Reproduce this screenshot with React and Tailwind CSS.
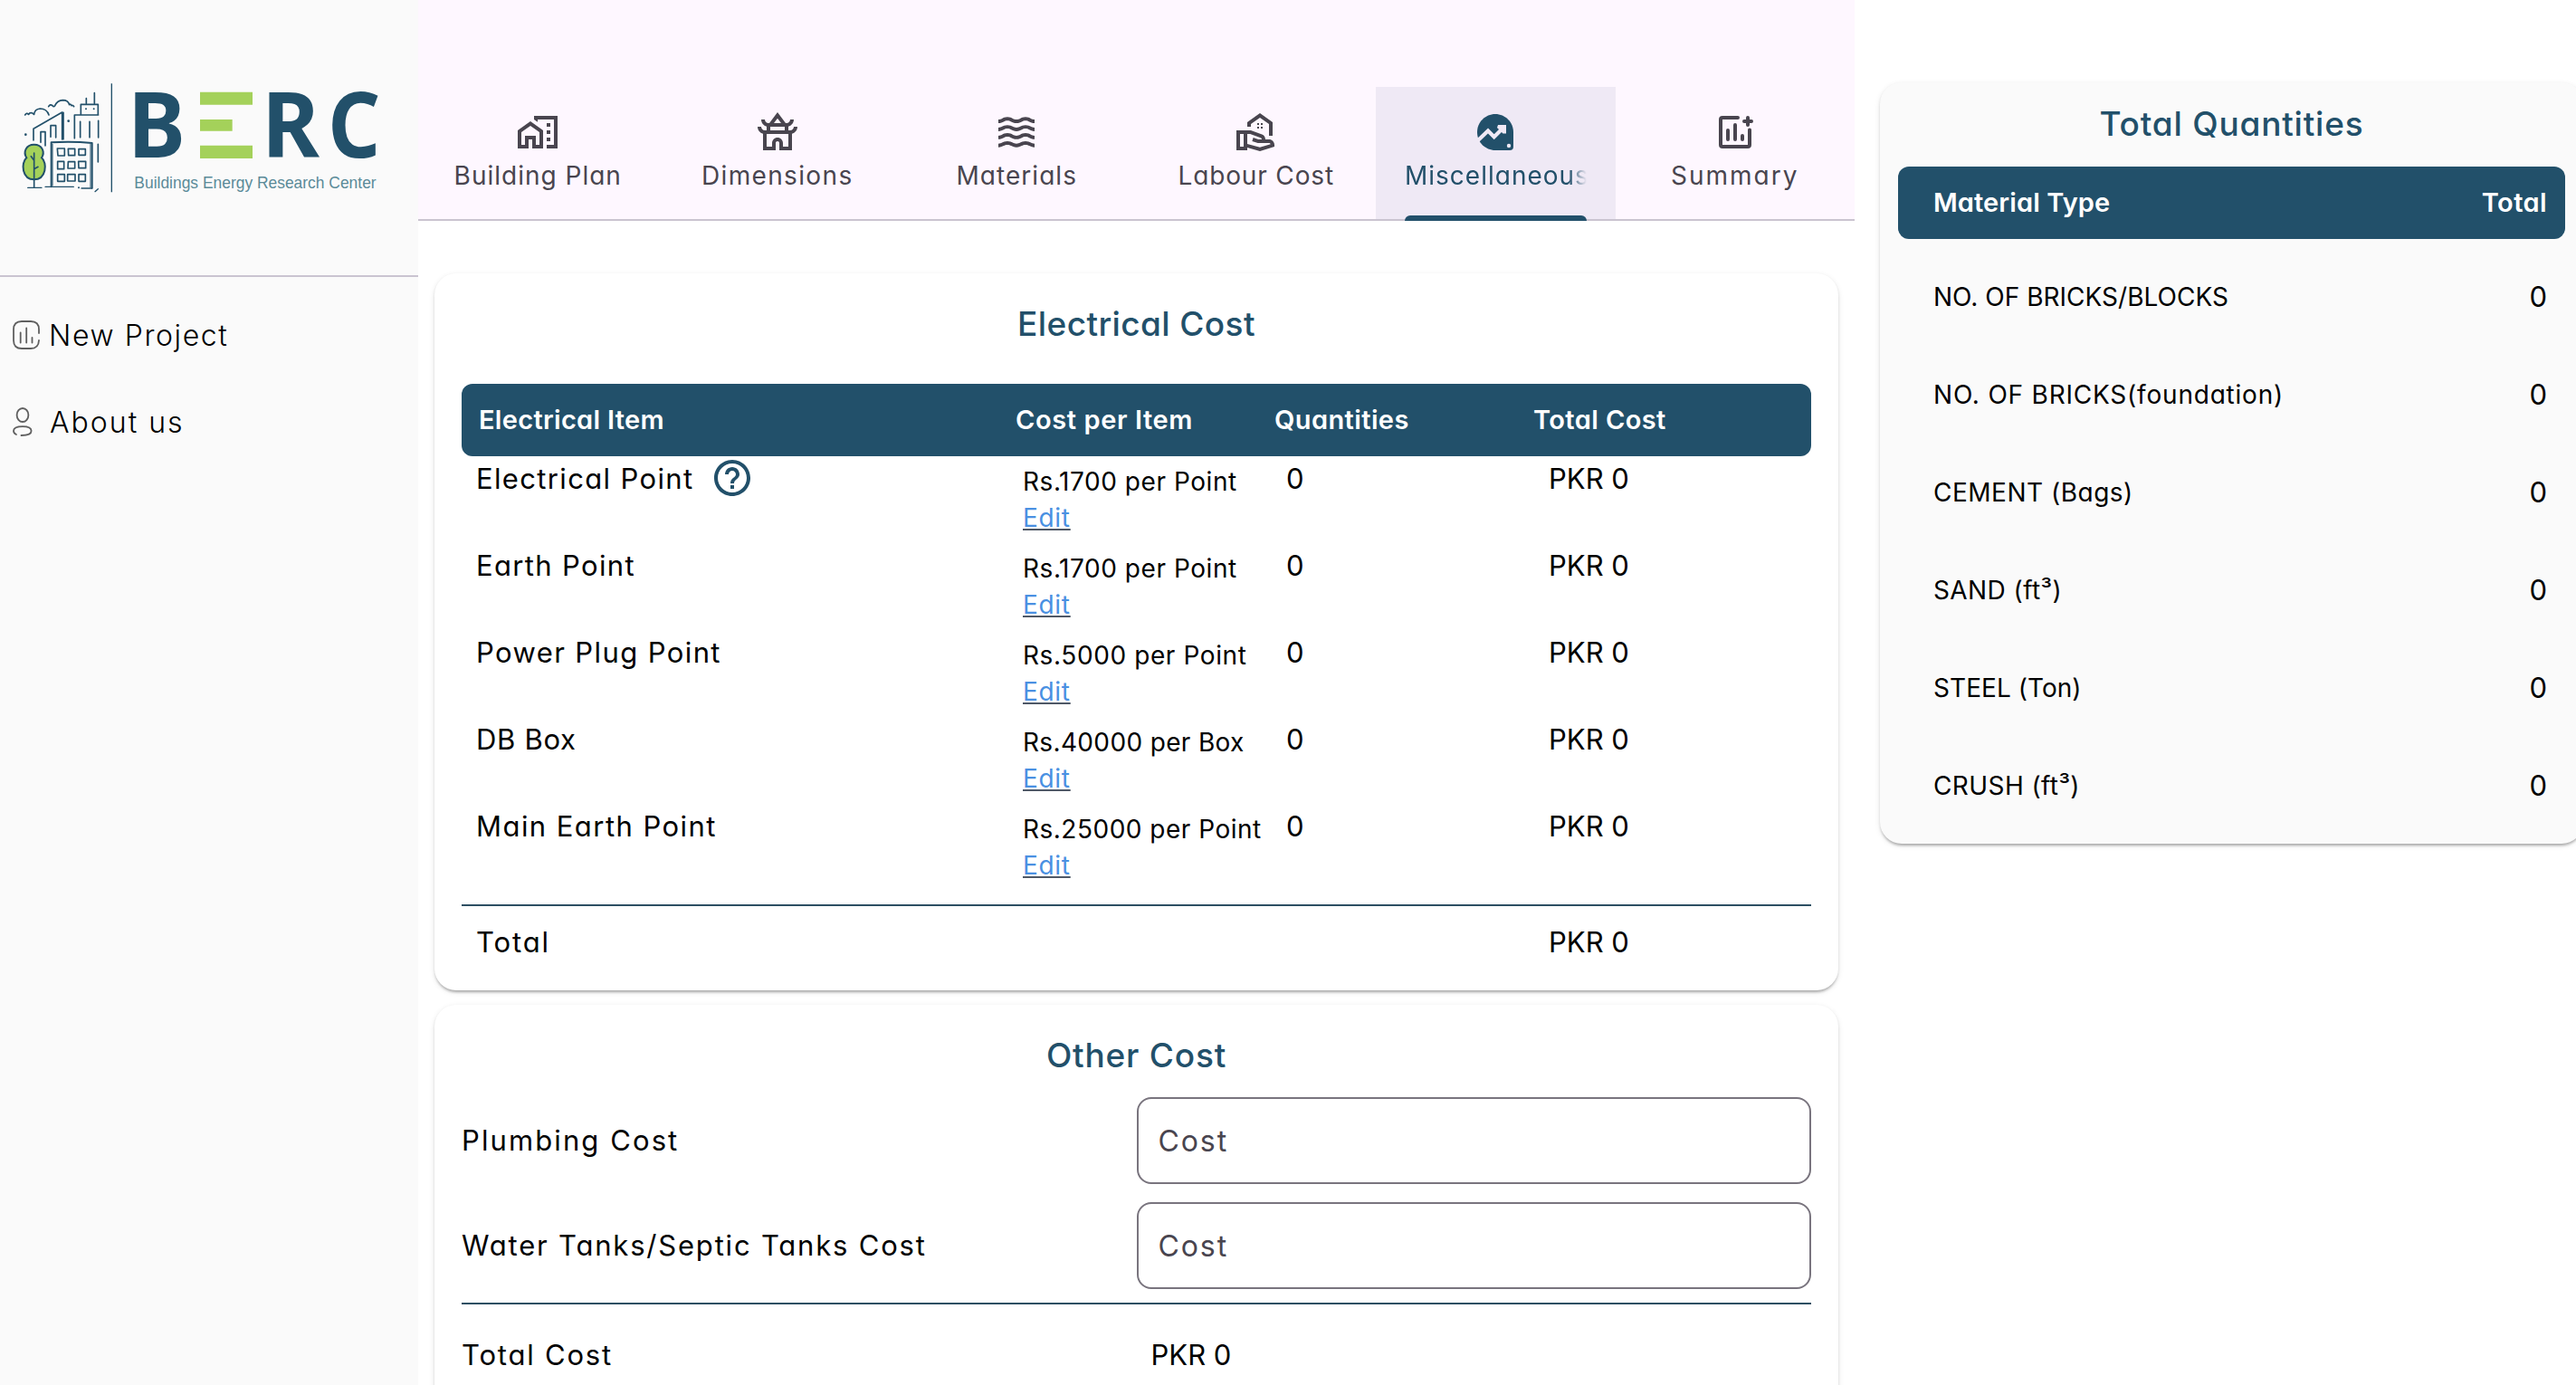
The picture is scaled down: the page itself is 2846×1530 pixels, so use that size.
import {
  MdOutlineMapsHomeWork,
  MdOutlineTempleBuddhist,
  MdWaves,
  MdOutlineRealEstateAgent,
  MdHelpOutline,
} from "react-icons/md";

function TrendIcon({ className }) {
  return (
    <svg viewBox="0 0 48 48" className={className}>
      <path d="M24 4C13 4 4 13 4 24s9 20 20 20h16a4 4 0 0 0 4-4V24C44 13 35 4 24 4z" fill="currentColor" />
      <path d="M4.500 33.500 16 22.500 22.700 29.200 33 19" fill="none" className="stroke-[#efe9f5]" strokeWidth="4.200" />
      <path d="M27 16h9v9.500h-3.500L26 19z" className="fill-[#efe9f5]" />
      <circle cx="39" cy="39" r="2.200" className="fill-[#efe9f5]" />
    </svg>
  );
}

function AddChartIcon({ className }) {
  return (
    <svg viewBox="0 0 24 24" className={className} fill="none" stroke="currentColor" strokeWidth="2" strokeLinecap="round" strokeLinejoin="round">
      <path d="M13.5 4H5a1 1 0 0 0-1 1v14a1 1 0 0 0 1 1h14a1 1 0 0 0 1-1v-8.2" />
      <path d="M8 11v5M12 8v8M16 14v2M19 4v4M17 6h4" />
    </svg>
  );
}

function ProjectIcon() {
  return (
    <svg viewBox="0 0 30 32" className="h-8 w-[30px] text-[#5f5f5f]" fill="none" stroke="currentColor" strokeWidth="1.8" strokeLinecap="round">
      <path d="M29 14V10Q29 1 20 1H10Q1 1 1 10V22Q1 31 10 31H20Q28.6 31 29 22" />
      <path d="M8.7 13.5V24.5M15.2 8.5V24.5M21.5 19V24.5" />
    </svg>
  );
}

function PersonIcon() {
  return (
    <svg viewBox="0 0 22 32" className="h-8 w-[22px] text-[#5f5f5f]" fill="none" stroke="currentColor" strokeWidth="1.8" strokeLinecap="round">
      <ellipse cx="11" cy="8.5" rx="6.4" ry="7.5" />
      <path d="M4 30C2.2 29.2 1 28 1 26C1 22.6 5.5 21.2 11 21.2S20.6 22.600 20.600 26S16 31 9.500 31" />
    </svg>
  );
}

function Logo() {
  return (
    <svg viewBox="0 -60 1410 570" className="mt-[50px] block h-[190px] w-[470px] shrink-0">
      <g fill="none" stroke="#22506a" strokeWidth="5" strokeLinecap="round" strokeLinejoin="round">
        <path d="M83 171q5-9 12-2 4-8 13-4 6 6 5 3 2-16 20-18 22 0 29 21" />
        <path d="M161 143q5-9 13-3 4 6 8 0 8-17 26-18 18 0 22 15 4-4 7 3 4-3 8 3" />
        <path d="M111 255V217L206 162V252M204 165l6-2v88" />
        <path d="M135 262v-35h15v46M168 244v-38h17v40" />
        <path d="M247 248V171H326M268 169V136H325V169M286 132V116M313 132V98" />
        <path d="M266 193v52M297 193v52M326 190v56M325 268v59" />
        <path d="M170 409V262Q240 258 305 264V413" strokeWidth="6" />
        <path d="M174 268V405M300 268V411" strokeWidth="3" />
        <path d="M92 412H138M150 409H244M270 414H305M315 425l10-9" strokeWidth="4" />
      </g>
      <path
        d="M113 269C86 269 76 294 88 313C68 330 73 385 113 385S158 330 138 313C150 294 140 269 113 269Z"
        fill="#a4d15a"
        stroke="#22506a"
        strokeWidth="6"
      />
      <path d="M113 410V297M113 322l-10-14M113 350l13-7" stroke="#22506a" strokeWidth="5" fill="none" strokeLinecap="round" />
      <g fill="none" stroke="#22506a" strokeWidth="5" strokeLinejoin="round">
        <path d="M190 282h24v24h-22zM226 283h22v22h-21zM261 284h22v20h-22z" />
        <path d="M191 325h21v25h-21zM226 326h22v22h-23zM260 325h24v22h-23z" />
        <path d="M191 368h23v23h-23zM224 368h25v22h-25zM261 368h22v23h-22z" />
      </g>
      <g fill="#22506a">
        <circle cx="85" cy="236" r="4" />
        <circle cx="227" cy="191" r="4" />
        <circle cx="285" cy="151" r="3" />
        <circle cx="311" cy="151" r="3" />
        <circle cx="261" cy="412" r="3" />
      </g>
      <path d="M370 67V427" stroke="#22506a" strokeWidth="4" />
      <g className="font-['Noto_Sans',sans-serif] font-bold" fontSize="304" fill="#22506a">
        <text x="424" y="311" textLength="191" lengthAdjust="spacingAndGlyphs">B</text>
        <text x="868" y="311" textLength="191" lengthAdjust="spacingAndGlyphs">R</text>
        <text x="1087" y="311" textLength="174" lengthAdjust="spacingAndGlyphs">C</text>
      </g>
      <path d="M663 95h174v42H663zM663 186h107v38H663zM663 272h174v43H663z" fill="#a4d15a" />
      <text x="445" y="415" fontSize="57" textLength="802" lengthAdjust="spacingAndGlyphs" fill="#5b8b99" className="font-['Liberation_Sans',sans-serif]">
        Buildings Energy Research Center
      </text>
    </svg>
  );
}

const tabs = [
  { label: "Building Plan", Icon: MdOutlineMapsHomeWork, tracking: "tracking-[1px]" },
  { label: "Dimensions", Icon: MdOutlineTempleBuddhist, tracking: "tracking-[1.35px]" },
  { label: "Materials", Icon: MdWaves, tracking: "tracking-[1.05px]" },
  { label: "Labour Cost", Icon: MdOutlineRealEstateAgent, tracking: "tracking-[0.85px]" },
  { label: "Miscellaneous", Icon: TrendIcon, tracking: "tracking-[1px]", active: true },
  { label: "Summary", Icon: AddChartIcon, tracking: "tracking-[2px]" },
];

const electrical = [
  { item: "Electrical Point", cost: "Rs.1700 per Point", help: true, it: "tracking-[1.35px]", ct: "tracking-[0.55px]" },
  { item: "Earth Point", cost: "Rs.1700 per Point", it: "tracking-[1.35px]", ct: "tracking-[0.55px]" },
  { item: "Power Plug Point", cost: "Rs.5000 per Point", it: "tracking-[1.4px]", ct: "tracking-[0.6px]" },
  { item: "DB Box", cost: "Rs.40000 per Box", it: "tracking-[0.7px]", ct: "tracking-[0.35px]" },
  { item: "Main Earth Point", cost: "Rs.25000 per Point", it: "tracking-[1.45px]", ct: "tracking-[0.5px]" },
];

const quantities = [
  { name: "NO. OF BRICKS/BLOCKS", tracking: "tracking-[0.02px]" },
  { name: "NO. OF BRICKS(foundation)", tracking: "tracking-[0.79px]" },
  { name: "CEMENT (Bags)", tracking: "tracking-[0.5px]" },
  { name: "SAND (ft³)", tracking: "tracking-[0.41px]" },
  { name: "STEEL (Ton)", tracking: "tracking-[0.05px]" },
  { name: "CRUSH (ft³)", tracking: "tracking-[0.41px]" },
];

const otherCosts = [
  { label: "Plumbing Cost", tracking: "tracking-[2.1px]" },
  { label: "Water Tanks/Septic Tanks Cost", tracking: "tracking-[1.8px]" },
];

const cardShadow =
  "shadow-[0_4px_3px_-2px_rgba(0,0,0,0.2),0_2px_3px_rgba(0,0,0,0.1),0_2px_6px_rgba(0,0,0,0.1)]";

function Sidebar() {
  return (
    <aside className="flex w-[462px] shrink-0 flex-col overflow-hidden bg-[#fafafa]">
      <Logo />
      <div className="mt-16 h-0.5 shrink-0 bg-[#cac4d0]" />
      <nav className="flex flex-col pt-4 text-[32px] font-[350] text-black">
        <a className="flex h-24 items-center pl-3.5">
          <span className="w-10"><ProjectIcon /></span>
          <span className="pt-0.5 tracking-[1.6px]">New Project</span>
        </a>
        <a className="flex h-24 items-center pl-3.5">
          <span className="w-[41px]"><PersonIcon /></span>
          <span className="pt-0.5 tracking-[2px]">About us</span>
        </a>
      </nav>
    </aside>
  );
}

function Tabs() {
  return (
    <div className="grid h-[244px] shrink-0 grid-cols-6 border-b-2 border-[#cac4d0] bg-[#fef7ff] pt-24">
      {tabs.map(({ label, Icon, tracking, active }) => (
        <div
          key={label}
          className={`relative flex flex-col items-center px-8 pt-[26px] ${active ? "bg-[#efe9f5] text-[#22506a]" : "text-[#49454f]"}`}
        >
          <Icon className="h-12 w-12 shrink-0" />
          <span
            className={`mt-1 max-w-full overflow-hidden whitespace-nowrap text-[28px] leading-10 ${tracking} ${active ? "[mask-image:linear-gradient(to_right,black_90%,transparent)]" : ""}`}
          >
            {label}
          </span>
          {active && <div className="absolute inset-x-8 -bottom-0.5 h-1.5 rounded-t-md bg-[#22506a]" />}
        </div>
      ))}
    </div>
  );
}

function ElectricalCard() {
  return (
    <section className={`flex h-[792px] shrink-0 flex-col rounded-3xl bg-white px-[30px] ${cardShadow}`}>
      <h2 className="h-[122px] text-center text-[37px] leading-[111px] font-[550] tracking-[0.4px] text-[#22506a]">Electrical Cost</h2>
      <div className="grid h-20 grid-cols-[611px_287px_286px_1fr] items-center rounded-xl bg-[#22506a] text-[29px] font-semibold text-white">
        <span className="pl-[19px] tracking-[0.3px]">Electrical Item</span>
        <span className="pl-px tracking-[0.6px]">Cost per Item</span>
        <span className="tracking-[0.4px]">Quantities</span>
        <span className="tracking-[0.4px]">Total Cost</span>
      </div>
      {electrical.map(({ item, cost, help, it, ct }) => (
        <div key={item} className="grid h-24 grid-cols-[611px_287px_286px_1fr] text-[31px] leading-[50px] text-black">
          <span className="flex pl-4">
            <span className={it}>{item}</span>
            {help && <MdHelpOutline className="ml-[19px] h-12 w-12 text-[#22506a]" />}
          </span>
          <span className="flex flex-col items-start pt-2 pl-[9px] text-[28px] leading-10 whitespace-nowrap">
            <span className={ct}>{cost}</span>
            <a className="tracking-[0.7px] text-[#4a90e2] underline decoration-[#4f5866] decoration-2 underline-offset-[2px]">Edit</a>
          </span>
          <span className="pl-[13px]">0</span>
          <span className="pl-[17px]">PKR 0</span>
        </div>
      ))}
      <div className="mt-[15px] h-0.5 shrink-0 bg-[#2d4f63]" />
      <div className="grid h-20 grid-cols-[611px_287px_286px_1fr] items-center text-[31px] text-black">
        <span className="pl-4 tracking-[1.9px]">Total</span>
        <span />
        <span />
        <span className="pl-[17px]">PKR 0</span>
      </div>
    </section>
  );
}

function OtherCostCard() {
  return (
    <section className={`flex h-[520px] shrink-0 flex-col rounded-3xl bg-white px-[30px] text-[31px] text-black ${cardShadow}`}>
      <h2 className="h-[102px] text-center text-[37px] leading-[111px] font-[550] tracking-[0.8px] text-[#22506a]">Other Cost</h2>
      <div className="flex flex-col gap-5">
        {otherCosts.map(({ label, tracking }) => (
          <label key={label} className="grid h-24 grid-cols-2 items-center">
            <span className={`pt-px ${tracking}`}>{label}</span>
            <input
              placeholder="Cost"
              className="h-24 rounded-[16px] border-2 border-[#79747e] bg-white px-[22px] text-[32px] tracking-[1.9px] placeholder:text-[#49454f] placeholder:opacity-100"
            />
          </label>
        ))}
      </div>
      <div className="mt-[15px] h-0.5 shrink-0 bg-[#2d4f63]" />
      <div className="grid h-28 grid-cols-2 items-center">
        <span className="tracking-[1.8px]">Total Cost</span>
        <span className="pl-4">PKR 0</span>
      </div>
    </section>
  );
}

function QuantitiesCard() {
  return (
    <section className={`mt-[91px] ml-7 flex h-[841px] w-[777px] shrink-0 flex-col rounded-3xl bg-[#fafafa] px-5 ${cardShadow}`}>
      <h2 className="h-[93px] text-center text-[37px] leading-[92px] font-[550] tracking-[0.8px] text-[#22506a]">Total Quantities</h2>
      <div className="mb-2.5 flex h-20 items-center justify-between rounded-xl bg-[#22506a] pr-5 pl-[39px] text-[29px] font-semibold text-white">
        <span className="tracking-[0.1px]">Material Type</span>
        <span className="tracking-[0.4px]">Total</span>
      </div>
      {quantities.map(({ name, tracking }) => (
        <div key={name} className="flex h-[108px] items-center justify-between pr-5 pl-[39px] text-[28px] text-black">
          <span className={tracking}>{name}</span>
          <span className="text-[31px]">0</span>
        </div>
      ))}
    </section>
  );
}

export default function App() {
  return (
    <div className="flex h-[1530px] w-[2846px] overflow-hidden bg-white font-['Inter','Open_Sans',sans-serif] [font-feature-settings:'cv11']">
      <Sidebar />
      <main className="flex w-[1587px] shrink-0 flex-col overflow-hidden">
        <Tabs />
        <div className="flex flex-col gap-4 px-[18px] pt-[58px]">
          <ElectricalCard />
          <OtherCostCard />
        </div>
      </main>
      <QuantitiesCard />
    </div>
  );
}
